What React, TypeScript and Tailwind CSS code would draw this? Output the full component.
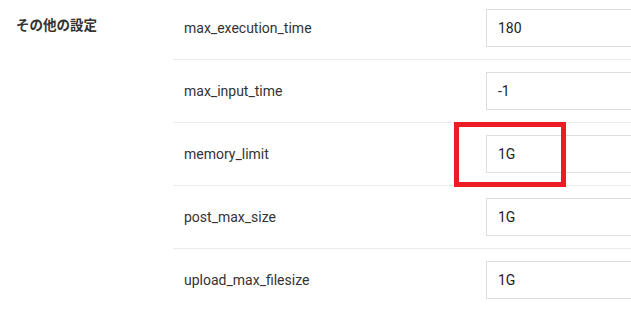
import React from "react";

const rows = [
  { label: "max_execution_time", value: "180" },
  { label: "max_input_time", value: "-1" },
  { label: "memory_limit", value: "1G" },
  { label: "post_max_size", value: "1G" },
  { label: "upload_max_filesize", value: "1G" },
];

export default function App() {
  return (
    <div
      className="relative w-[631px] h-[309px] overflow-hidden bg-white"
      style={{ fontFamily: 'Roboto, "Noto Sans CJK JP", sans-serif' }}
    >
      <div className="flex -mt-[3px]">
        <div className="w-[173px] shrink-0 pl-4 pt-[18px]">
          <div
            className="text-[13.5px] font-bold text-[#333] leading-[18px]"
            style={{ fontFamily: '"Noto Sans CJK JP", sans-serif' }}
          >
            その他の設定
          </div>
        </div>
        <div className="flex-1 min-w-0">
          {rows.map((r) => (
            <div
              key={r.label}
              className="flex items-center h-[63px] border-b border-[#ebebeb]"
            >
              <div className="w-[313px] shrink-0 pl-[11px] text-[14px] text-[#333]">
                {r.label}
              </div>
              <div className="flex-1 h-[38px] border border-[#dedede] flex items-center pl-[11px] text-[14px] text-[#222] -mr-2">
                {r.value}
              </div>
            </div>
          ))}
        </div>
      </div>
      <div className="absolute left-[454px] top-[122px] w-[112px] h-[65px] border-[5px] border-[#ed1c24]" />
    </div>
  );
}
